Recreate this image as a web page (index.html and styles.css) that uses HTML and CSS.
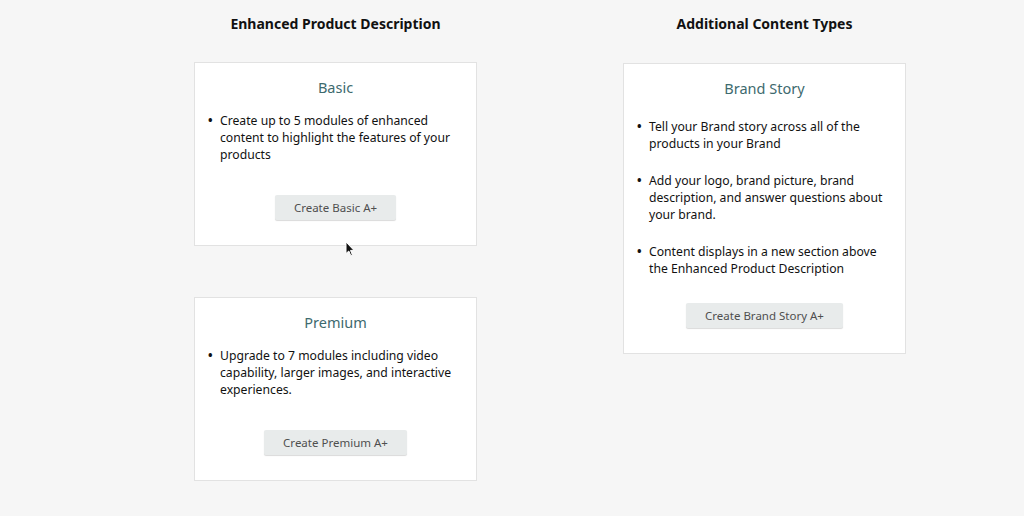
FILE: index.html
```html
<!DOCTYPE html>
<html lang="en">
<head>
	<meta charset="utf-8" />
	<title>A+ Content Manager - Choose content type</title>
	<link rel="stylesheet" href="styles.css">
</head>
<body>
	<main class="types">
		<section class="column">
			<h2 class="columnTitle">Enhanced Product Description</h2>

			<div class="card">
				<h3 class="cardTitle">Basic</h3>
				<ul class="points">
					<li>Create up to 5 modules of enhanced content to highlight the features of your products</li>
				</ul>
				<button class="createBtn">Create Basic A+</button>
			</div>

			<div class="card">
				<h3 class="cardTitle">Premium</h3>
				<ul class="points">
					<li>Upgrade to 7 modules including video capability, larger images, and interactive experiences.</li>
				</ul>
				<button class="createBtn">Create Premium A+</button>
			</div>
		</section>

		<section class="column">
			<h2 class="columnTitle">Additional Content Types</h2>

			<div class="card story">
				<h3 class="cardTitle">Brand Story</h3>
				<ul class="points">
					<li>Tell your Brand story across all of the products in your Brand</li>
					<li>Add your logo, brand picture, brand description, and answer questions about your brand.</li>
					<li>Content displays in a new section above the Enhanced Product Description</li>
				</ul>
				<button class="createBtn">Create Brand Story A+</button>
			</div>
		</section>
	</main>

	<!-- mouse pointer caught in the capture -->
	<svg class="pointer" width="10" height="16" viewBox="0 0 10 16">
		<path d="M1 1 L1 12.5 L3.8 10 L5.8 14.6 L7.4 13.9 L5.5 9.4 L9 9.4 Z" fill="#111" stroke="#fff" stroke-width="1"/>
	</svg>
</body>
</html>
```

FILE: styles.css
```css
body{
	margin: 0;
	padding: 0;
	background: #f6f6f6;
	font-family: "Noto Sans", "Open Sans", sans-serif;
	color: #111;
	height: 516px;
	overflow: hidden;
}

.types{
	display: flex;
	gap: 146px;
	padding: 14px 0 0 194px;
}

.column{
	width: 283px;
	display: flex;
	flex-direction: column;
}

.columnTitle{
	margin: 0 0 28px;
	font-size: 14px;
	line-height: 20px;
	font-weight: bold;
	text-align: center;
	color: #111;
}

.card{
	background: #fff;
	border: 1px solid #e2e2e2;
	padding: 14px 20px 25px 13px;
	margin-bottom: 51px;
	display: flex;
	flex-direction: column;
	align-items: center;
}

.column:last-child .card{
	margin-top: 1px;
}

.cardTitle{
	margin: 0;
	font-size: 14.5px;
	line-height: 20px;
	font-weight: normal;
	color: #3e6a6e;
	padding-left: 7px;
}

.points{
	align-self: stretch;
	list-style: none;
	margin: 15px 0 32px;
	padding: 0 0 0 12px;
	font-size: 12.2px;
	line-height: 17px;
	color: #111;
}

.points li{
	margin: 0;
}

.points li::before{
	content: "\2022";
	display: inline-block;
	width: 12px;
	margin-left: -12px;
	font-weight: bold;
}

.story .points{
	margin: 15px 0 26px;
}

.story .points li:first-child{
	padding-top: 5px;
}

.story .points li + li{
	margin-top: 20px;
}

.createBtn{
	font-family: inherit;
	font-size: 11.5px;
	color: #4f4f4f;
	background: #e8ebeb;
	border: none;
	border-radius: 2px;
	box-shadow: 0 1px 1px rgba(0,0,0,0.15);
	height: 25px;
	padding: 0 19px;
	margin-left: 7px;
}

.pointer{
	position: absolute;
	left: 345px;
	top: 241px;
}
```
